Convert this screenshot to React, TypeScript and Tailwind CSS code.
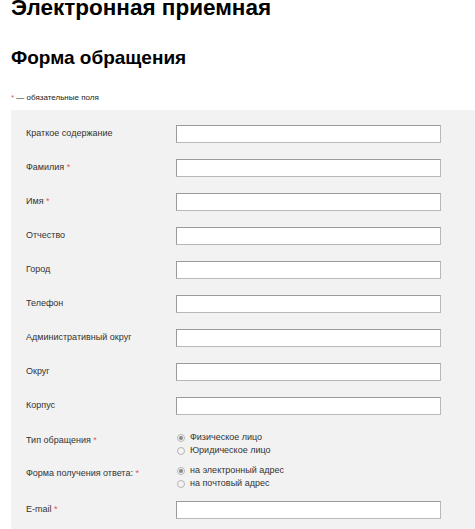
import React from "react";

const Star = () => <span className="text-[#e05a5a]"> *</span>;

const fields: { label: string; req?: boolean }[] = [
  { label: "Краткое содержание" },
  { label: "Фамилия", req: true },
  { label: "Имя", req: true },
  { label: "Отчество" },
  { label: "Город" },
  { label: "Телефон" },
  { label: "Административный округ" },
  { label: "Округ" },
  { label: "Корпус" },
];

const Input = () => (
  <div className="w-[265px] h-[18px] bg-white border border-[#b8b8b8] border-t-[#9a9a9a] border-l-[#9a9a9a]" />
);

const Radio = ({ checked, label }: { checked?: boolean; label: string }) => (
  <div className="flex items-center h-[13px]">
    <span className="w-[8px] h-[8px] rounded-full border border-[#b5b5b5] bg-[#f4f4f4] flex items-center justify-center mr-[5px] ml-[1px]">
      {checked && <span className="w-[4px] h-[4px] rounded-full bg-[#8a8a8a]" />}
    </span>
    <span>{label}</span>
  </div>
);

export default function App() {
  return (
    <div className="w-[475px] h-[529px] overflow-hidden bg-white text-black" style={{ fontFamily: '"Liberation Sans", Arial, sans-serif' }}>
      <div className="pl-[11px]">
        <h1 className="text-[22.5px] font-bold leading-[20px] -mt-[2px] h-[17px] whitespace-nowrap">Электронная приемная</h1>
        <h2 className="text-[19px] font-bold leading-[20px] mt-[33px]">Форма обращения</h2>
        <div className="text-[8px] leading-[10px] mt-[25px] text-[#222]">
          <span className="text-[#e05a5a]">*</span> — обязательные поля
        </div>
        <div className="mt-[7px] bg-[#f2f2f2] pl-[15px] pt-[15px] pb-[20px] text-[9px] text-[#333]">
          <div className="flex flex-col gap-[16px]">
            {fields.map((f) => (
              <div key={f.label} className="flex items-center">
                <div className="w-[150px]">
                  {f.label}
                  {f.req && <Star />}
                </div>
                <Input />
              </div>
            ))}
            <div className="flex items-start">
              <div className="w-[150px] pt-[3px]">
                Тип обращения<Star />
              </div>
              <div className="flex flex-col">
                <Radio checked label="Физическое лицо" />
                <Radio label="Юридическое лицо" />
              </div>
            </div>
            <div className="flex items-start -mt-[9px]">
              <div className="w-[150px] pt-[3px]">
                Форма получения ответа:<Star />
              </div>
              <div className="flex flex-col">
                <Radio checked label="на электронный адрес" />
                <Radio label="на почтовый адрес" />
              </div>
            </div>
            <div className="flex items-center -mt-[5px]">
              <div className="w-[150px]">
                E-mail<Star />
              </div>
              <Input />
            </div>
          </div>
        </div>
      </div>
    </div>
  );
}
